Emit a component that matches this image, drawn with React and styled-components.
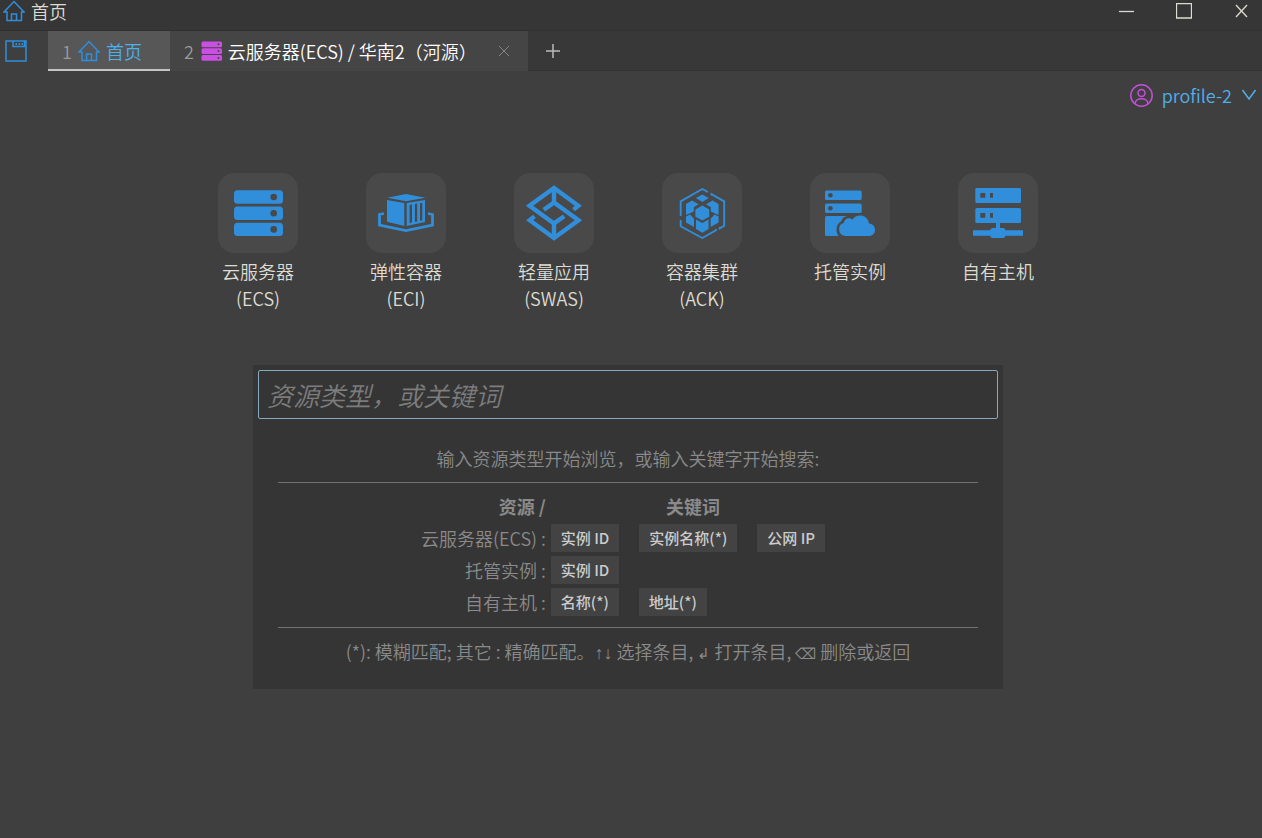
import React, { useState } from 'react';
import { styled, createGlobalStyle } from 'styled-components';

const resources = [
  { name: '云服务器', sub: '(ECS)', Icon: EcsIcon },
  { name: '弹性容器', sub: '(ECI)', Icon: EciIcon },
  { name: '轻量应用', sub: '(SWAS)', Icon: SwasIcon },
  { name: '容器集群', sub: '(ACK)', Icon: AckIcon },
  { name: '托管实例', sub: '', Icon: ManagedIcon },
  { name: '自有主机', sub: '', Icon: HostIcon },
];

const hints = [
  { label: '云服务器(ECS)', keys: ['实例 ID', '实例名称(*)', '公网 IP'] },
  { label: '托管实例', keys: ['实例 ID'] },
  { label: '自有主机', keys: ['名称(*)', '地址(*)'] },
];

export default function App() {
  const [keyword, setKeyword] = useState('');

  return (
    <Page>
      <GlobalStyle />
      <TitleBar>
        <HomeIcon />
        <Title>首页</Title>
        <WindowButton aria-label="最小化">
          <svg width="16" height="16"><path d="M0 8.5H15" /></svg>
        </WindowButton>
        <WindowButton aria-label="最大化">
          <svg width="16" height="16"><path d="M.5 .5H15.5V15H.5Z" /></svg>
        </WindowButton>
        <WindowButton aria-label="关闭">
          <svg width="16" height="16"><path d="M3 2L14 14M14 2L3 14" /></svg>
        </WindowButton>
      </TitleBar>

      <TabBar>
        <SaveButton aria-label="保存"><SaveIcon /></SaveButton>
        <Tab $active>
          <TabLink href="#home">
            <TabIndex>1</TabIndex>
            <HomeIcon />
            <span>首页</span>
          </TabLink>
        </Tab>
        <Tab>
          <TabLink href="#ecs">
            <TabIndex>2</TabIndex>
            <ServerIcon />
            <span>云服务器(ECS) / 华南2（河源）</span>
          </TabLink>
          <CloseButton aria-label="关闭标签">
            <svg width="12" height="12"><path d="M1 1L11 11M11 1L1 11" /></svg>
          </CloseButton>
        </Tab>
        <AddButton aria-label="新建标签">
          <svg width="16" height="16"><path d="M1 8H15M8 1V15" /></svg>
        </AddButton>
      </TabBar>

      <Profile>
        <ProfileIcon />
        profile-2
        <svg width="16" height="12" viewBox="0 0 16 12" fill="none" stroke="#4fb0ea" strokeWidth="1.5">
          <path d="M1.5 1L8 10L14.5 1" />
        </svg>
      </Profile>

      <Content>
        <Resources>
          {resources.map(({ name, sub, Icon }) => (
            <Resource key={name} href="#resource">
              <Tile><Icon /></Tile>
              <span>{name}</span>
              {sub && <span>{sub}</span>}
            </Resource>
          ))}
        </Resources>

        <Panel>
          <SearchInput
            aria-label="搜索"
            placeholder="资源类型，或关键词"
            value={keyword}
            onChange={(e) => setKeyword(e.target.value)}
          />
          <Help>
            <Intro>输入资源类型开始浏览，或输入关键字开始搜索:</Intro>
            <HintBox>
              <HintTable>
                <thead>
                  <tr>
                    <th>资源 /</th>
                    <th>关键词</th>
                  </tr>
                </thead>
                <tbody>
                  {hints.map((hint) => (
                    <tr key={hint.label}>
                      <td>{hint.label} :</td>
                      <td>
                        <Keys>
                          {hint.keys.map((key) => <Key key={key}>{key}</Key>)}
                        </Keys>
                      </td>
                    </tr>
                  ))}
                </tbody>
              </HintTable>
            </HintBox>
            <Footnote>
              (*): 模糊匹配; 其它 : 精确匹配。<Arrows>↑↓</Arrows> 选择条目, <Glyph>↲</Glyph> 打开条目, <Glyph>⌫</Glyph> 删除或返回
            </Footnote>
          </Help>
        </Panel>
      </Content>
    </Page>
  );
}

function HomeIcon() {
  return (
    <svg width="22" height="22" viewBox="0 0 22 22" fill="none" stroke="#318edb" strokeWidth="1.5">
      <path d="M4 20.5V12H1L11 1.5L21 12H18.5V20.5Z" />
      <path d="M8.5 20.5V14H13.5V20.5" />
    </svg>
  );
}

function SaveIcon() {
  return (
    <svg width="22" height="22" viewBox="0 0 22 22" fill="none" stroke="#318edb" strokeWidth="1.5">
      <path d="M1 1H21V21H1Z" />
      <path d="M8 1V6.5H19.5V1" />
      <path d="M10.5 4H12M13.5 4H15M16.5 4H18" strokeWidth="2" />
    </svg>
  );
}

function ServerIcon() {
  return (
    <svg width="22" height="22" viewBox="0 0 22 22" fill="#cc4fe3">
      <rect x="1.5" y="1.5" width="20.5" height="5.7" rx="1.5" />
      <rect x="1.5" y="8.3" width="20.5" height="5.7" rx="1.5" />
      <rect x="1.5" y="15.1" width="20.5" height="5.7" rx="1.5" />
      <g fill="#454545">
        <circle cx="18.5" cy="4.3" r="1" />
        <circle cx="18.5" cy="11.1" r="1" />
        <circle cx="18.5" cy="17.9" r="1" />
      </g>
    </svg>
  );
}

function ProfileIcon() {
  return (
    <svg width="24" height="24" viewBox="0 0 24 24" fill="none" stroke="#c44fdb" strokeWidth="1.5">
      <circle cx="12.5" cy="12.5" r="10.7" />
      <circle cx="12.5" cy="10" r="3.5" />
      <path d="M6 20.8C6.5 14 18.5 14 19 20.8" />
    </svg>
  );
}

function EcsIcon() {
  return (
    <svg width="80" height="80" viewBox="0 0 80 80">
      <rect x="16" y="17.3" width="49" height="13.4" rx="3.5" />
      <rect x="16" y="33.5" width="49" height="13.4" rx="3.5" />
      <rect x="16" y="49.7" width="49" height="13.4" rx="3.5" />
      <g fill="#494949">
        <circle cx="55.7" cy="24" r="3.3" />
        <circle cx="55.7" cy="40.2" r="3.3" />
        <circle cx="55.7" cy="56.4" r="3.3" />
      </g>
    </svg>
  );
}

function EciIcon() {
  return (
    <svg width="80" height="80" viewBox="0 0 80 80">
      <path d="M40 21L59.3 24.7L40 28.3L21.3 24.7Z" />
      <path d="M21 27L38.3 30V53L21 48.7Z" />
      <path fillRule="evenodd" d="M40.7 30L59 27V49L40.7 53ZM43.6 32V50L46 49.5V31.5ZM48.9 31V49L51.2 48.5V30.6ZM54 30.2V47.8L56.3 47.3V29.8Z" />
      <path d="M18 40.5L13.5 41.5V52L40 57.5L66.5 52V41.5L62 40.5" fill="none" stroke="#318edb" strokeWidth="2.8" />
    </svg>
  );
}

function SwasIcon() {
  return (
    <svg width="80" height="80" viewBox="0 0 80 80">
      <g fill="none" stroke="#318edb" strokeWidth="4.4">
        <path d="M59.5 36.6L64.3 32.8L40 15L15.5 32.7L40 50.5" />
        <path d="M40 15V29.5L29.8 36.8" />
        <path d="M20.5 43.4L15.7 47.2L40 65L64.5 47.3L40 29.5" />
        <path d="M40 65V50.5L50.2 43.2" />
      </g>
    </svg>
  );
}

function AckIcon() {
  return (
    <svg width="80" height="80" viewBox="0 0 80 80">
      <g fill="none" stroke="#318edb" strokeWidth="1.9">
        <path d="M45 19.5V18.5L40.3 16L18.7 28.3V43" />
        <path d="M18.7 47V53.3L40.3 65L54 57.3V56" />
        <path d="M57.7 54V55.3L62.2 52.7V28.3L49.5 21.2V22.5" />
      </g>
      <path d="M40.3 21.4L46.8 25.1L40.3 29L33.8 25.1Z" />
      <path d="M40.3 32.6L47.2 36.4V43.7L40.3 47.5L33.4 43.7V36.4Z" />
      <path d="M24 31L30 27.4L36.6 31.2L31.8 34.2V38.5L24 42Z" />
      <path d="M56.6 31L50.6 27.4L44 31.2L48.8 34.2V38.5L56.6 42Z" />
      <path d="M24 43.5L28 41.6L32 45.8V54L24 49.6Z" />
      <path d="M56.6 43.5L52.6 41.6L48.6 45.8V54L56.6 49.6Z" />
      <path d="M34 46.5L40.3 50L46.6 46.5V56L40.3 59.7L34 56Z" />
    </svg>
  );
}

function ManagedIcon() {
  return (
    <svg width="80" height="80" viewBox="0 0 80 80">
      <rect x="15" y="17.5" width="36.7" height="9.5" rx="1.5" />
      <rect x="15" y="30.4" width="36.7" height="9.5" rx="1.5" />
      <path d="M16.5 43H38V63H16.5A1.5 1.5 0 0 1 15 61.5V44.5A1.5 1.5 0 0 1 16.5 43Z" />
      <g fill="#494949">
        <circle cx="20.4" cy="22.3" r="2.3" />
        <circle cx="20.4" cy="35.2" r="2.3" />
        <path d="M28.5 63C25.5 59 25.5 51.5 31 48.5C32 45.5 34 43.5 37 43H42V63Z" />
      </g>
      <path d="M35.5 63C31.5 63 29.2 60 29.2 56.5C29.2 52.5 31 50.5 34 50C34 46.5 38 43.5 42.5 46.5C46 40.5 57.5 40.5 59 50.5C63 51 65 53.5 65 57C65 60.5 62.5 63 59 63Z" />
    </svg>
  );
}

function HostIcon() {
  return (
    <svg width="80" height="80" viewBox="0 0 80 80">
      <rect x="17.3" y="15" width="45.7" height="15" rx="1.5" />
      <rect x="17.3" y="35" width="45.7" height="15" rx="1.5" />
      <path d="M38 50H42V55H38ZM15 57.3H65V62.7H15Z" />
      <rect x="32.3" y="55" width="15" height="10" rx="2.5" />
      <g fill="#494949">
        <path d="M22.3 20H27.3V24.8H22.3ZM32 20H35V24.8H32Z" />
        <path d="M22.3 40H27.3V44.8H22.3ZM32 40H35V44.8H32Z" />
      </g>
    </svg>
  );
}

const GlobalStyle = createGlobalStyle`
*{
  box-sizing: border-box;
}
body{
  margin: 0;
  background: #3f3f3f;
  color: #dedcd2;
  font: 18px/27px "Noto Sans CJK SC", sans-serif;
  font-weight: 350;
}
button, input{
  font: inherit;
  color: inherit;
}
button{
  display: flex;
  align-items: center;
  justify-content: center;
  padding: 0;
  border: 0;
  background: none;
}
a{
  color: inherit;
  text-decoration: none;
}
svg{
  display: block;
  flex-shrink: 0;
}
`

const Page = styled.div`
min-height: 100vh;
display: flex;
flex-direction: column;
`

const TitleBar = styled.header`
display: flex;
align-items: flex-start;
height: 31px;
padding-left: 3px;
background: #363636;
border-bottom: 1px solid #303030;
`

const Title = styled.span`
flex: 1;
margin-left: 6px;
line-height: 22px;
`

const WindowButton = styled.button`
width: 42px;
height: 21px;
margin-left: 15px;
svg{
  fill: none;
  stroke: #dedcd2;
  stroke-width: 1.3;
}
`

const TabBar = styled.nav`
display: flex;
height: 40px;
background: #383838;
`

const SaveButton = styled.button`
width: 48px;
justify-content: flex-start;
padding-left: 5px;
background: #3f3f3f;
`

const Tab = styled.div`
display: flex;
align-items: center;
padding: 0 ${({ $active }) => ($active ? '28px' : '18px')} 0 14px;
background: ${({ $active }) => ($active ? '#575757' : '#454545')};
color: ${({ $active }) => ($active ? '#4fb0ea' : '#fff')};
box-shadow: ${({ $active }) => ($active ? 'inset 0 -2px #c4c4c4' : 'none')};
`

const TabLink = styled.a`
display: flex;
align-items: center;
gap: 6px;
white-space: nowrap;
`

const TabIndex = styled.span`
color: #999;
`

const CloseButton = styled.button`
margin-left: 21px;
svg{
  stroke: #858585;
}
`

const AddButton = styled.button`
flex: 1;
justify-content: flex-start;
padding-left: 17px;
border-bottom: 1px solid #333;
svg{
  stroke: #bbb;
  stroke-width: 1.5;
}
`

const Profile = styled.button`
align-self: flex-end;
height: 48px;
gap: 9px;
padding-right: 5px;
color: #4fb0ea;
`

const Content = styled.main`
display: flex;
flex-direction: column;
align-items: center;
padding: 54px 6px 0 0;
`

const Resources = styled.div`
display: flex;
gap: 68px;
`

const Resource = styled.a`
display: flex;
flex-direction: column;
align-items: center;
width: 80px;
`

const Tile = styled.div`
margin-bottom: 5px;
border-radius: 16px;
background: #494949;
svg{
  fill: #318edb;
}
`

const Panel = styled.section`
width: 100%;
max-width: 750px;
margin-top: 53px;
padding: 5px;
background: #353535;
`

const SearchInput = styled.input`
display: block;
width: 100%;
height: 49px;
padding: 0 8px;
border: 1px solid #83a9bb;
border-radius: 2px;
outline: none;
background: transparent;
font-size: 26px;
&::placeholder{
  color: #7c7c7c;
  font-style: italic;
  opacity: 1;
}
`

const Help = styled.div`
padding: 26px 20px 17px;
color: #8a8a8a;
text-align: center;
`

const Intro = styled.p`
margin: 0 0 10px;
`

const HintBox = styled.div`
padding: 10px 0 9px;
border: solid #717171;
border-width: 1px 0;
`

const HintTable = styled.table`
margin: 0 auto;
border-collapse: collapse;
th, td{
  padding: 2px 10px 2px 0;
}
th{
  padding: 0 0 2px;
  font-weight: 700;
}
th:first-child, td:first-child{
  padding-right: 5px;
  text-align: right;
}
`

const Keys = styled.div`
display: flex;
gap: 20px;
`

const Key = styled.kbd`
padding: 0 10px;
background: #434343;
color: #ccc;
font: 500 15px/28px "Noto Sans CJK SC", sans-serif;
`

const Footnote = styled.p`
margin: 10px 0 0;
`

const Arrows = styled.span`
font-family: "Liberation Sans", sans-serif;
`

const Glyph = styled.span`
font-size: 15px;
`
